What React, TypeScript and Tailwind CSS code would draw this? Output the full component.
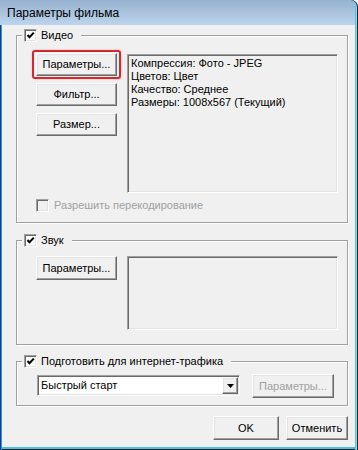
import type { ReactNode } from "react";

const raised =
  "border border-t-white border-l-white border-r-[#696969] border-b-[#696969] shadow-[inset_-1px_-1px_0_#a0a0a0,inset_1px_1px_0_#e3e3e3]";
const sunken =
  "border border-t-[#a0a0a0] border-l-[#a0a0a0] border-b-white border-r-white shadow-[inset_1px_1px_0_#696969,inset_-1px_-1px_0_#e3e3e3]";

function Check({ checked, disabled }: { checked?: boolean; disabled?: boolean }) {
  return (
    <span
      className={`flex w-[13px] h-[13px] shrink-0 items-center justify-center ${sunken} ${
        disabled ? "bg-[#f0f0f0]" : "bg-white"
      }`}
    >
      {checked && (
        <svg width="9" height="9" viewBox="0 0 9 9">
          <path d="M1.5 4 L3.5 6.2 L7.8 1.6" fill="none" stroke="#000" strokeWidth="2" />
        </svg>
      )}
    </span>
  );
}

function Button({
  children,
  className = "",
  disabled,
}: {
  children: ReactNode;
  className?: string;
  disabled?: boolean;
}) {
  return (
    <div
      className={`flex items-center justify-center bg-[#f0f0f0] ${raised} ${
        disabled ? "text-[#a0a0a0]" : "text-black"
      } ${className}`}
    >
      {children}
    </div>
  );
}

function Group({
  label,
  className,
  children,
}: {
  label: string;
  className: string;
  children: ReactNode;
}) {
  return (
    <div
      className={`relative w-[332px] border border-[#a0a0a0] shadow-[inset_1px_1px_0_#fff,1px_1px_0_#fff] ${className}`}
    >
      <div className="absolute left-[5px] -top-[7px] flex h-[13px] items-center gap-[4px] bg-[#f0f0f0] pl-[2px] pr-[8px]">
        <Check checked />
        <span className="leading-[13px]">{label}</span>
      </div>
      {children}
    </div>
  );
}

export default function App() {
  return (
    <div className="relative w-[358px] h-[450px] overflow-hidden rounded-tr-[7px] bg-[#f0f0f0] font-['Liberation_Sans',Arial,sans-serif] text-[11px] text-black shadow-[inset_1px_0_0_#1d3f6a,inset_2px_0_0_#3b8ee2,inset_-1px_0_0_#262626,inset_-2px_0_0_#8fd9f0,inset_-3px_0_0_#4cc4ec,inset_0_-1px_0_#1a1a1a,inset_0_-3px_0_#45c1ea]">
      <div className="mr-[3px] flex h-[25px] items-center rounded-tr-[6px] bg-linear-to-b from-[#97b2cf] to-[#bcd4ec] pl-[7px] text-[12px]">
        Параметры фильма
      </div>

      <div className="flex flex-col pl-[16px]">
        {/* video */}
        <Group label="Видео" className="mt-[10px] h-[188px] pt-[17px] pl-[19px]">
          <div className="flex items-start gap-[10px]">
            <div className="flex flex-col gap-[7px]">
              <div className="relative">
                <Button className="w-[81px] h-[23px]">Параметры...</Button>
                <div className="absolute -left-[4px] -right-[4px] -top-[3px] -bottom-[3px] rounded-[3px] border-2 border-[#d3282c] shadow-[0_0_2px_#f0a0a0]" />
              </div>
              <Button className="w-[81px] h-[23px]">Фильтр...</Button>
              <Button className="w-[81px] h-[23px]">Размер...</Button>
            </div>
            <div className={`mt-[1px] w-[211px] h-[139px] px-[3px] pt-[2px] leading-[13px] ${sunken}`}>
              <div>Компрессия: Фото - JPEG</div>
              <div>Цветов: Цвет</div>
              <div>Качество: Среднее</div>
              <div>Размеры: 1008x567 (Текущий)</div>
            </div>
          </div>
          <div className="mt-[6px] flex items-center gap-[5px]">
            <Check disabled />
            <span className="leading-[13px] text-[#a0a0a0]">Разрешить перекодирование</span>
          </div>
        </Group>

        {/* sound */}
        <Group label="Звук" className="mt-[17px] h-[105px] pt-[15px] pl-[19px]">
          <div className="flex items-start gap-[10px]">
            <Button className="w-[81px] h-[24px]">Параметры...</Button>
            <div className={`w-[211px] h-[74px] ${sunken}`} />
          </div>
        </Group>

        {/* internet */}
        <Group label="Подготовить для интернет-трафика" className="mt-[16px] h-[45px] pt-[12px] pl-[20px]">
          <div className="flex items-start gap-[12px]">
            <div className={`mt-[1px] flex w-[203px] h-[21px] items-center bg-white pl-[2px] pr-[1px] ${sunken}`}>
              <span className="flex-1 pl-[1px]">Быстрый старт</span>
              <div className={`flex w-[16px] h-[17px] items-center justify-center bg-[#f0f0f0] ${raised}`}>
                <svg width="7" height="4" viewBox="0 0 7 4">
                  <path d="M0 0 H7 L3.5 4 Z" fill="#000" />
                </svg>
              </div>
            </div>
            <Button disabled className="w-[82px] h-[24px]">
              Параметры...
            </Button>
          </div>
        </Group>

        <div className="mt-[10px] flex w-[332px] justify-end gap-[7px]">
          <Button className="w-[66px] h-[24px]">OK</Button>
          <Button className="w-[62px] h-[24px]">Отменить</Button>
        </div>
      </div>
    </div>
  );
}
